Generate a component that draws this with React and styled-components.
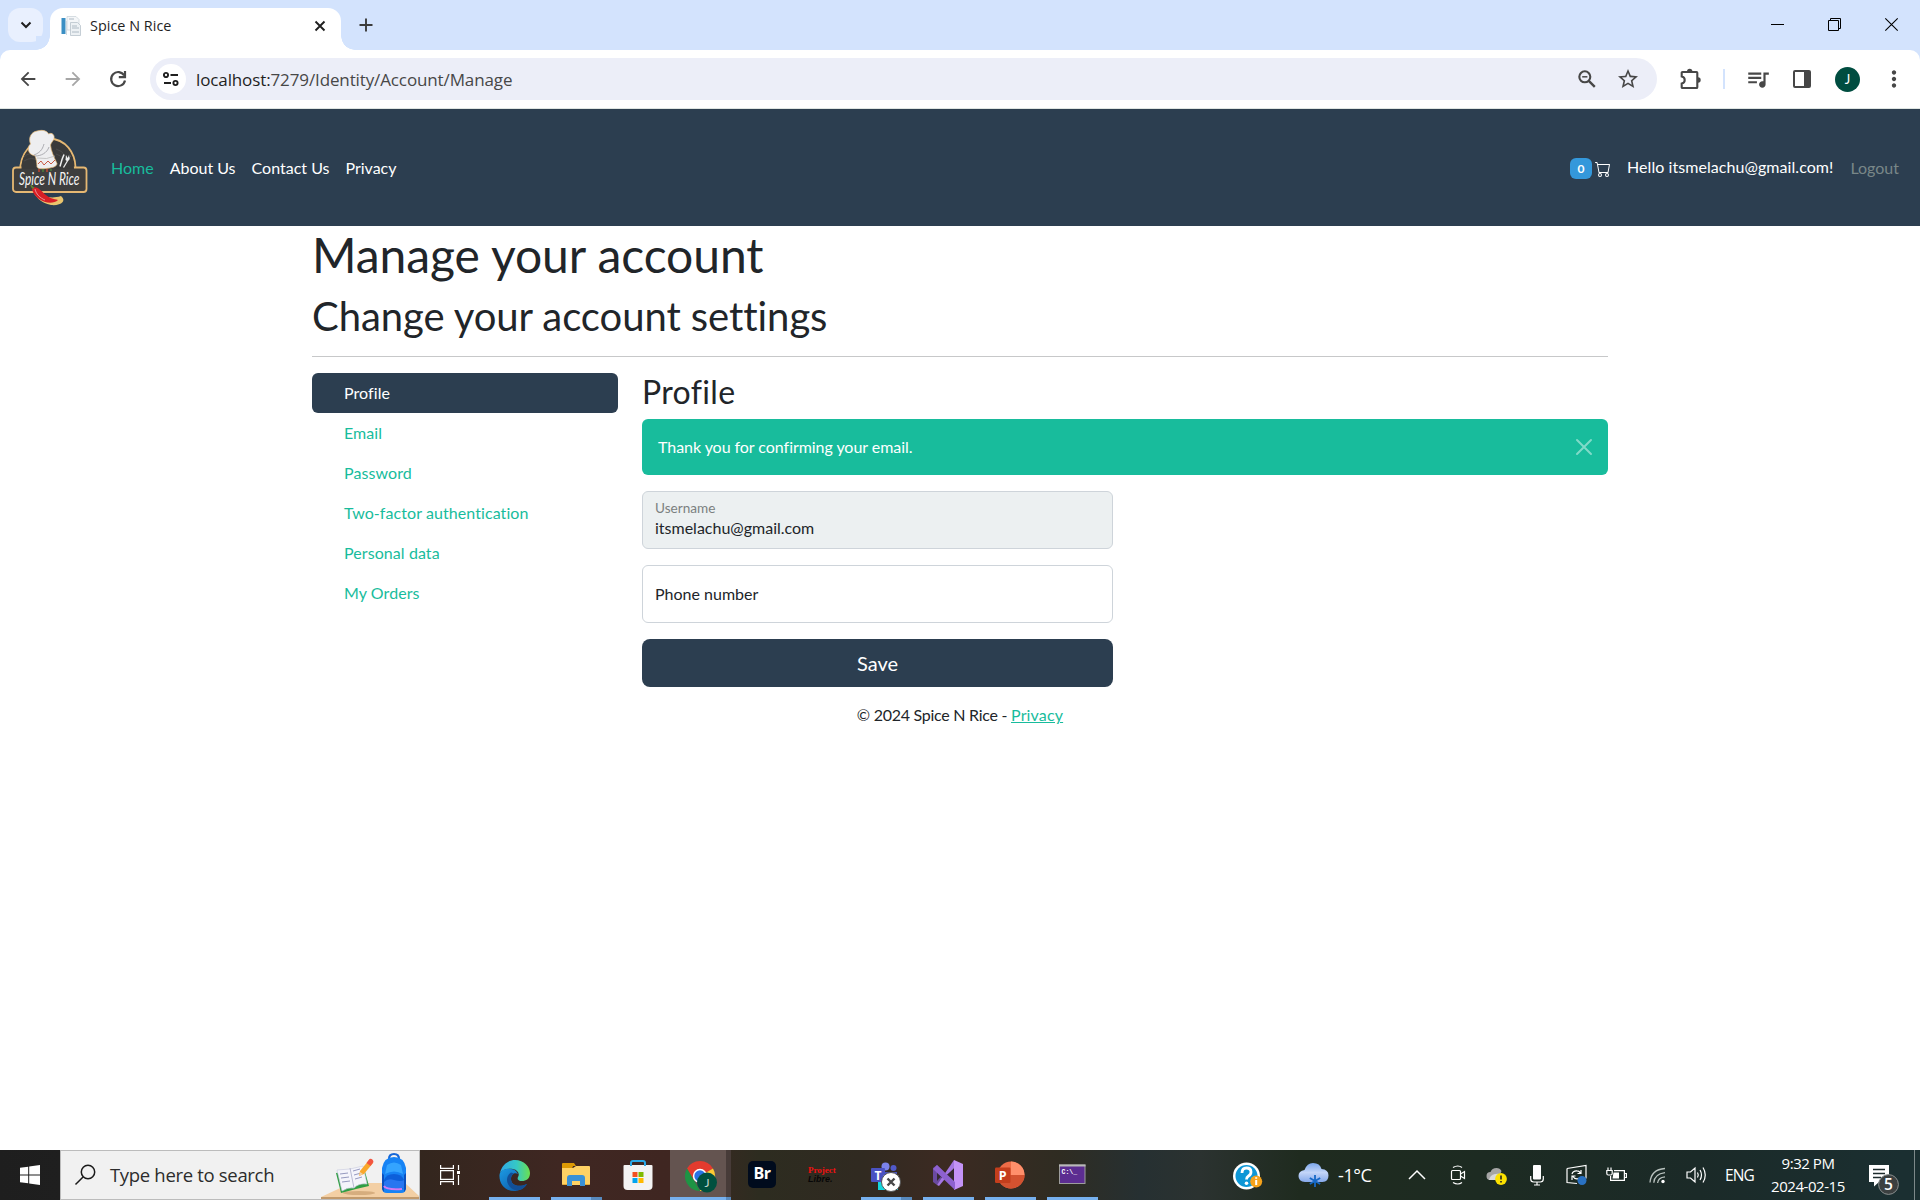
import React from "react";
import styled, { createGlobalStyle, css } from "styled-components";
import {
  MdArrowBack,
  MdArrowForward,
  MdStarOutline,
  MdQueueMusic,
  MdMoreVert,
} from "react-icons/md";
import { BsCart } from "react-icons/bs";

const GlobalStyle = createGlobalStyle`
  *, *::before, *::after { box-sizing: border-box; }
  body {
    margin: 0;
    background: #fff;
    overflow: hidden;
  }
  svg { display: block; flex: none; overflow: visible; }
`;

const uiFont = `"Open Sans", "Noto Sans", sans-serif`;
const pageFont = `Lato, "Liberation Sans", sans-serif`;

const Screen = styled.div`
  display: flex;
  flex-direction: column;
  width: 1920px;
  height: 1200px;
  overflow: hidden;
`;

/* ---------- Browser window ---------- */

const TabStrip = styled.div`
  display: flex;
  align-items: flex-start;
  height: 50px;
  padding: 8px 0 0 8px;
  background: #d3e3fd;
`;

const TabSearch = styled.button`
  display: grid;
  place-items: center;
  width: 35px;
  height: 34px;
  padding: 0;
  border: 0;
  border-radius: 12px;
  background: #e9f0fe;
`;

const TabFoot = styled.span`
  align-self: flex-end;
  width: 14px;
  height: 14px;
  background: radial-gradient(
    circle at ${(p) => (p.$side === "left" ? "0 0" : "100% 0")},
    #d3e3fd 13.5px,
    #fff 14px
  );
  ${(p) =>
    p.$side === "left" &&
    css`
      margin-left: -7px;
    `}
`;

const Tab = styled.div`
  display: flex;
  align-items: center;
  width: 291px;
  height: 42px;
  padding: 0 11px 7px 11px;
  border-radius: 13px 13px 0 0;
  background: #fff;
`;

const TabTitle = styled.span`
  flex: 1;
  margin-left: 9px;
  font: 400 14.4px/20px ${uiFont};
  letter-spacing: 0.03px;
  color: #1f1f1f;
`;

const NewTab = styled.button`
  display: grid;
  place-items: center;
  width: 34px;
  height: 34px;
  margin-left: -6px;
  padding: 0;
  border: 0;
  background: none;
`;

const WindowControls = styled.div`
  display: flex;
  margin: -8px 0 0 auto;
`;

const WindowButton = styled.button`
  display: grid;
  place-items: center;
  width: 57px;
  height: 49px;
  padding: 0;
  border: 0;
  background: none;
`;

const ToolbarBack = styled.div`
  background: #d3e3fd;
`;

const Toolbar = styled.div`
  display: flex;
  align-items: center;
  height: 59px;
  padding-left: 5px;
  border-bottom: 1px solid #dfe5e2;
  border-radius: 10px 10px 0 0;
  background: #fff;
  color: #474747;
`;

const ToolButton = styled.button`
  display: grid;
  place-items: center;
  width: ${(p) => p.$w || 45}px;
  height: 42px;
  padding: 0;
  border: 0;
  background: none;
  color: ${(p) => (p.$muted ? "#a6a6a6" : "#474747")};
`;

const Omnibox = styled.div`
  display: flex;
  align-items: center;
  width: 1507px;
  height: 42px;
  margin-left: 10px;
  padding: 0 9px 0 6px;
  border-radius: 21px;
  background: #eceef8;
`;

const SiteInfo = styled.span`
  display: grid;
  place-items: center;
  width: 30px;
  height: 30px;
  border-radius: 50%;
  background: #fff;
`;

const Url = styled.span`
  flex: 1;
  margin-left: 10px;
  padding-top: 1px;
  font: 400 17px/24px ${uiFont};
  letter-spacing: -0.12px;
  color: #474747;

  b {
    font-weight: 400;
    color: #1f1f1f;
  }
`;

const Divider = styled.span`
  width: 2px;
  height: 20px;
  background: #d3e3fd;
`;

const Avatar = styled.span`
  display: grid;
  place-items: center;
  width: 25px;
  height: 25px;
  border-radius: 50%;
  background: #004d40;
  font: 400 13px/25px ${pageFont};
  color: #fff;
`;

/* ---------- Page ---------- */

const Page = styled.div`
  flex: 1;
  font: 400 16px/24px ${pageFont};
  font-variant-ligatures: none;
  color: #212529;
  background: #fff;
`;

const Navbar = styled.nav`
  display: flex;
  align-items: center;
  height: 117px;
  padding: 0 21px 0 12px;
  background: #2c3e50;
`;

const NavLinks = styled.div`
  display: flex;
  gap: 16px;
  margin-left: 23px;
`;

const NavLink = styled.a`
  color: ${(p) => (p.$active ? "#18bc9c" : "#fff")};
`;

const NavRight = styled.div`
  display: flex;
  align-items: center;
  margin-left: auto;
  color: #fff;
`;

const Badge = styled.span`
  width: 22px;
  height: 21px;
  margin-top: 1px;
  border-radius: 6px;
  background: #3498db;
  font-size: 12px;
  font-weight: 700;
  line-height: 21px;
  text-align: center;
`;

const CartIcon = styled(BsCart)`
  margin: 2px 0 0 3px;
`;

const Greeting = styled.span`
  margin: -1px 0 0 16px;
  letter-spacing: 0.06px;
`;

const Logout = styled.span`
  margin-left: 17px;
  color: #798788;
`;

const Container = styled.main`
  width: 1320px;
  margin: 0 auto;
  padding: 0 12px;
`;

const Heading = styled.h1`
  margin: 0 0 8px;
  font-size: ${(p) => p.$size}px;
  font-weight: 400;
  line-height: 1.2;
  letter-spacing: ${(p) => (p.$size > 32 ? "-0.06px" : "0.35px")};
`;

const Rule = styled.hr`
  height: 1px;
  margin: 16px 0;
  border: 0;
  background: #c7c8c9;
`;

const Columns = styled.div`
  display: grid;
  grid-template-columns: 306px 966px;
  gap: 24px;
`;

const SideNav = styled.ul`
  margin: 0;
  padding: 0;
  list-style: none;
  letter-spacing: 0.08px;
`;

const SideItem = styled.li`
  height: 40px;
  padding: 8px 32px;
  border-radius: 6px;
  color: ${(p) => (p.$active ? "#fff" : "#18bc9c")};
  background: ${(p) => (p.$active ? "#2c3e50" : "transparent")};
`;

const Alert = styled.div`
  display: flex;
  align-items: center;
  justify-content: space-between;
  height: 56px;
  margin-bottom: 16px;
  padding: 0 16px;
  border-radius: 6px;
  background: #18bc9c;
  color: #fff;
  letter-spacing: -0.05px;
`;

const Form = styled.form`
  display: flex;
  flex-direction: column;
  gap: 16px;
  width: 471px;
`;

const Field = styled.label`
  display: flex;
  flex-direction: column;
  justify-content: center;
  height: 58px;
  padding: ${(p) => (p.$disabled ? "0 12px 3px" : "0 12px")};
  border: 1px solid #ced4da;
  border-radius: 6px;
  background: ${(p) => (p.$disabled ? "#ecf0f1" : "#fff")};
`;

const FieldLabel = styled.span`
  padding-top: 1px;
  font-size: 13.6px;
  line-height: 19px;
  color: #7b8080;
`;

const FieldValue = styled.span`
  line-height: 20px;
`;

const SaveButton = styled.button`
  height: 48px;
  border: 0;
  border-radius: 8px;
  background: #2c3e50;
  color: #fff;
  font: 400 20px/30px ${pageFont};
`;

const Footer = styled.footer`
  padding-top: 16px;
  text-align: center;
  letter-spacing: -0.27px;

  a {
    color: #18bc9c;
    letter-spacing: 0.15px;
    text-decoration: underline;
  }
`;

/* ---------- Taskbar ---------- */

const Taskbar = styled.div`
  display: flex;
  height: 50px;
  background: linear-gradient(
    90deg,
    #1e1e1e 0,
    #1f1f1f 60px,
    #33261e 420px,
    #3f2722 560px,
    #3f2621 670px,
    #2d2c20 760px,
    #302a21 860px,
    #3c2a22 945px,
    #2f2c22 1060px,
    #263032 1140px,
    #2b3230 1200px,
    #1f2b1f 1300px,
    #1d2b22 1480px,
    #1b2a28 1700px,
    #1b2f31 1900px,
    #1b2f31 1920px
  );
  color: #fff;
  font-family: ${uiFont};
`;

const Slot = styled.div`
  display: grid;
  place-items: center;
  width: ${(p) => p.$w}px;
  height: 50px;
`;

const SearchBox = styled.div`
  display: flex;
  align-items: center;
  width: 360px;
  height: 50px;
  padding-left: 13px;
  border: 1px solid #bcbcbc;
  background: #f1f1f1;
`;

const SearchText = styled.span`
  flex: 1;
  margin-left: 14px;
  font-size: 18.5px;
  line-height: 26px;
  letter-spacing: -0.32px;
  white-space: nowrap;
  color: #2c2c2c;
`;

const Apps = styled.div`
  display: flex;
  padding-left: 3px;
`;

const AppSlot = styled.div`
  display: flex;
  flex-direction: column;
  align-items: center;
  justify-content: space-between;
  width: 62px;
  height: 50px;
  padding-top: 10px;
  background: ${(p) =>
    p.$current
      ? "linear-gradient(90deg, transparent 1px, #645450 1px 57px, #473b38 57px)"
      : "none"};
`;

const OpenMark = styled.span`
  width: ${(p) => (p.$wide ? 61 : 51)}px;
  height: 3px;
  background: ${(p) =>
    p.$stacked
      ? "linear-gradient(90deg, #76b0ee 0 calc(100% - 11px), #5789bd calc(100% - 11px))"
      : p.$wide
      ? "linear-gradient(90deg, #76b0ee 0 56px, #5789bd 56px)"
      : p.$open
      ? "#76b0ee"
      : "transparent"};
`;

const BridgeTile = styled.span`
  width: 28px;
  height: 27px;
  margin-top: 1px;
  border-radius: 5px;
  background: #000b1d;
  font: 700 16px/25px ${uiFont};
  letter-spacing: -0.5px;
  text-align: center;
`;

const ProjectLogo = styled.span`
  display: flex;
  flex-direction: column;
  width: 32px;
  margin-top: 6px;
  font: 700 9px/9px "Liberation Serif", serif;
  color: #f01010;

  i {
    font-family: "Liberation Sans", sans-serif;
    color: #070707;
  }
`;

const Tray = styled.div`
  display: flex;
  margin-left: auto;
`;

const Temp = styled.div`
  display: flex;
  align-items: center;
  width: 127px;
  padding-left: 28px;
  gap: 9px;
  font-size: 18px;
  letter-spacing: -0.4px;
`;

const Lang = styled.span`
  font-size: 15.5px;
  line-height: 20px;
  letter-spacing: -0.8px;
`;

const Clock = styled.div`
  display: flex;
  flex-direction: column;
  align-items: center;
  width: 90px;
  padding-top: 2px;
  font-size: 15px;
  line-height: 23px;
  letter-spacing: -0.45px;
  white-space: nowrap;
`;

const ShowDesktop = styled.div`
  width: 6px;
  border-left: 1px solid #7d8889;
`;

/* ---------- Drawings ---------- */

const Favicon = () => (
  <svg width="20" height="20" viewBox="0 0 20 20">
    <path d="M6 .5h9l3 3V14H6z" fill="#f4f6f8" stroke="#cdd5dc" strokeWidth=".8" />
    <rect x=".5" y="2" width="4" height="16" fill="#3b8fc4" />
    <path d="M5.500 5v14" stroke="#d2dae0" />
    <path d="M9.500 6.500h7l3 3v10h-10z" fill="#edf1f4" stroke="#b9c3cc" strokeWidth=".8" />
    <path d="M11 10h5M11 12h7M11 16h7M8 3h5" stroke="#aebac4" />
  </svg>
);

const ReloadIcon = () => (
  <svg width="18" height="18" viewBox="0 0 18 18" fill="none" stroke="#474747" strokeWidth="2.200">
    <path d="M15.200 5.500A7 7 0 1 0 16 10.500" />
    <path d="M16 1v6.200H9.800" />
  </svg>
);

const ZoomOutIcon = () => (
  <svg width="18" height="18" viewBox="0 0 18 18" fill="none" stroke="#474747" strokeWidth="2.100">
    <circle cx="6.800" cy="6.800" r="5.500" />
    <path d="M10.800 10.800l6 6" strokeWidth="2.400" />
    <path d="M4.200 6.800h5.200" strokeWidth="1.500" />
  </svg>
);

const ExtensionIcon = () => (
  <svg width="22" height="22" viewBox="0 0 22 22">
    <path
      d="M3.500 4h14q.8 0 .8.800v14.400q0 .8-.8.800h-14q-.8 0-.8-.800v-3.700c2-.4 3-1.600 3-3.500s-1-3.100-3-3.500V4.800q0-.8.8-.800z"
      fill="none"
      stroke="#474747"
      strokeWidth="2.100"
    />
    <path d="M8 3.500a2.700 2.700 0 0 1 5.400 0zM19 9.300a2.700 2.700 0 0 1 0 5.400z" fill="#474747" />
  </svg>
);

const SpiceLogo = () => (
  <svg width="76" height="78" viewBox="0 0 76 78">
    <path
      d="M8 43C8 24 20 10 37 9.500C54 10 63 24 63.500 38"
      fill="#3a3a3a"
      stroke="#e6b873"
      strokeWidth="1.800"
    />
    <rect x="1" y="38.500" width="73.500" height="24.500" rx="3" fill="#3e3e3e" stroke="#e6b873" strokeWidth="1.800" />
    <path d="M9.500 40C9 25 20 12 37 11C53 12 62 25 62 40z" fill="#3a3a3a" />
    <path d="M12 32q8-5 14 0M12 28q6-6 12-1M44 20q6 1 10 8M44 25q5 1 8 6" stroke="#4b4b4b" fill="none" />
    <path
      d="M25 38C25 34 24 28 22.500 26.500C16 26 14.500 18 18.500 15C16 9 19 3 25 2C32 0 36 3 36.500 5C40 3 43 6 42 10C41 12 39 14 38.500 16C39 22 42 28 45 34.500C45 38 39 39 34 39.500C30 40 26 40 25 38z"
      fill="#eeeef0"
      stroke="#e6b873"
      strokeWidth=".7"
    />
    <path d="M22 26c8-3 9-8 10-11M23 27c6 0 12-3 14-9" stroke="#9b9ba1" strokeWidth=".8" fill="none" />
    <path d="M25 29q10 2 18-2" stroke="#bbb" strokeWidth=".8" fill="none" />
    <path d="M26 35l3-3 3 4 4-4 3 3 4-4" stroke="#c85a44" strokeWidth="1" fill="none" />
    <path d="M27 40v3M35 40v3" stroke="#d5452f" strokeWidth="1.300" />
    <path d="M31 40v3M39 40v2" stroke="#4d8b3a" strokeWidth="1.300" />
    <path d="M52 25.500l-2 5-2 7" stroke="#efefef" strokeWidth="1.500" fill="none" />
    <path d="M56 31l-4.500 7.500" stroke="#efefef" strokeWidth="1.300" fill="none" />
    <path d="M54 26l-.5 5q2 2 4-.5l1-4.500-1.500 3.500.2-4-1.500 3.500z" fill="#efefef" />
    <text
      transform="translate(7 56) scale(.66 1)"
      fontFamily="Lato, sans-serif"
      fontStyle="italic"
      fontSize="18"
      fill="#f4f4f4"
    >
      Spice N Rice
    </text>
    <path d="M49 67C55 72 49 77 39 76C29 74 22 67 20.500 60C27 66 37 71 49 67z" fill="#e9c46d" />
    <path d="M20.500 58.500C25 57 29 61 32.500 65C37 69 42 70 46 71C42 75 33 74.500 27 70C22 66 19.500 62 20.500 58.500z" fill="#d81f26" />
    <path d="M23 60c1 5 5 9 10 11" stroke="#fff" strokeOpacity=".55" strokeWidth=".9" fill="none" />
    <path d="M19 56q1 3 3 3" stroke="#5c8a33" strokeWidth="1.500" fill="none" />
  </svg>
);

const WindowsLogo = () => (
  <svg width="20" height="20" viewBox="0 0 20 20" fill="#fff">
    <path d="M0 2.800L8.200 1.700V9.500H0zM9.200 1.500L20 0V9.500H9.200zM0 10.500H8.200V18.300L0 17.200zM9.200 10.500H20V20L9.200 18.500z" />
  </svg>
);

const SearchArt = () => (
  <svg width="98" height="48" viewBox="0 0 98 48">
    <path d="M0 46L30 32H84L98 45V46z" fill="#f3cfa4" />
    <path d="M0 46H98V48H0z" fill="#c29a6c" />
    <ellipse cx="38" cy="42" rx="16" ry="2" fill="#d6ad7e" />
    <path d="M15 22l5 20q14-4 28-7l-5-18z" fill="#2f9e44" />
    <path d="M16 19l13-1 13-3 4 18q-8-1-13 4-6-1-12 3z" fill="#f4f4fb" stroke="#c7c9dd" strokeWidth=".6" />
    <path d="M29 17l4 20" stroke="#b8bad2" />
    <path d="M19 23l8-1M20 27l8-1M21 31l8-1M32 20l7-2M33 24l7-2M34 28l7-2" stroke="#8a8fb8" strokeWidth=".9" />
    <path d="M38 25l1-5 9-11 4 3-9 11z" fill="#f9a72b" />
    <path d="M45.500 12l3-4q3-1 4 3l-3 4z" fill="#f25540" />
    <path d="M38 25l1-4 3 2z" fill="#efd0a6" />
    <path d="M68 8q0-5 5-5t5 5" stroke="#1768d8" strokeWidth="2.200" fill="none" />
    <path d="M61 17q2-11 12-11t12 11v20q0 5-5 5H66q-5 0-5-5z" fill="#1683f5" />
    <path d="M61 22l2 2v17l-2-3zM85 22l-2 2v17l2-3z" fill="#0b4fbd" />
    <path d="M66 14q7-5 14 0l2 9q-9-5-18 0z" fill="#34a4ff" />
    <path d="M63 29q2-6 10-6t10 6v8q-10 4-20 0z" fill="#0c5fda" />
    <path d="M63 31q4-4 10-2 7 2 10 0v8H63z" fill="#2876f0" />
    <path d="M63 35q2 4 18 3" stroke="#cf7bf2" strokeWidth="2" fill="none" />
  </svg>
);

const EdgeIcon = () => (
  <svg width="31" height="31" viewBox="0 0 31 31">
    <defs>
      <linearGradient id="edgeTop" x1="0" x2="1">
        <stop offset="0" stopColor="#2fa8e8" />
        <stop offset=".55" stopColor="#35c8c5" />
        <stop offset="1" stopColor="#6be04f" />
      </linearGradient>
      <linearGradient id="edgeBase" x1="0" y1="0" x2="1" y2="1">
        <stop offset="0" stopColor="#1b9be4" />
        <stop offset="1" stopColor="#0c4f9e" />
      </linearGradient>
    </defs>
    <path d="M1 13C3 4 10 0 16 0c9 0 15 7 15 13 0 6-4 8-8 8-4 0-5-2-4-4 2-3 0-7-5-8C8 8 3 10 1 13z" fill="url(#edgeTop)" />
    <path d="M.5 15C1 10 7 8 12 9c4 0 6 3 7 5-4-2-7 1-7 5 0 6 7 9 16 5-3 5-8 7-13 7C6 31 0 24 .5 15z" fill="url(#edgeBase)" />
    <path d="M12 12.500C8 15 7 20 9 24c2 4 5 6 9 6.500 4-.5 8-3 10-6.500-9 4-16 1-16-5 0-3 1-4 3-5.500z" fill="#124f97" />
  </svg>
);

const FolderIcon = () => (
  <svg width="28" height="31" viewBox="0 0 28 31">
    <path d="M0 4q0-1 1-1h11l2 3h-3l-1 3H0z" fill="#dd9a05" />
    <path d="M0 8h11l3-2h13q1 0 1 1v17q0 1-1 1H1q-1 0-1-1z" fill="#ffd264" />
    <path d="M5 26V18q0-3 3-3h12q3 0 3 3v8h-5v-5h-8v5z" fill="#3a91d6" />
    <path d="M1 24.500h4M23 24.500h4" stroke="#e8ad36" />
  </svg>
);

const StoreIcon = () => (
  <svg width="30" height="31" viewBox="0 0 30 31">
    <path d="M8 7V3q0-2 2-2h10q2 0 2 2v4" fill="none" stroke="#29a9e8" strokeWidth="2" />
    <path d="M.5 6q0-1 1-1H28.500q1 0 1 1V26q0 4-4 4H4.500q-4 0-4-4z" fill="#f3f3f3" />
    <path d="M8 6V3M22 6V3" stroke="#29a9e8" strokeWidth="2" />
    <path d="M9.500 12h5v5h-5z" fill="#f25022" />
    <path d="M15.500 12h5v5h-5z" fill="#7fba00" />
    <path d="M9.500 18h5v5h-5z" fill="#00a4ef" />
    <path d="M15.500 18h5v5h-5z" fill="#ffb900" />
  </svg>
);

const ChromeIcon = () => (
  <svg width="32" height="33" viewBox="0 0 32 33">
    <path d="M16 16L3 8.500A15 15 0 0 1 29 8.500z" fill="#e33b2e" />
    <path d="M16 16L29 8.500A15 15 0 0 1 16 31z" fill="#fcc934" />
    <path d="M3 8.500L9.500 20l6.500-4V9H29z" fill="#e33b2e" />
    <path d="M3 8.500l6.500 11L16 31A15 15 0 0 1 3 8.500z" fill="#1e9444" />
    <circle cx="16" cy="16" r="7.200" fill="#fff" />
    <circle cx="16" cy="16" r="5.700" fill="#2a72e5" />
    <circle cx="23" cy="22.500" r="10" fill="#00503f" />
    <text x="23" y="27" textAnchor="middle" fontFamily="Lato, sans-serif" fontSize="12" fill="#c4d5d0">
      J
    </text>
  </svg>
);

const TeamsIcon = () => (
  <svg width="30" height="32" viewBox="0 0 30 32">
    <circle cx="14.500" cy="6.500" r="4" fill="#7b83eb" />
    <circle cx="22.500" cy="8" r="3" fill="#5059c9" />
    <path d="M9 12h17v8H9z" fill="#4b53bc" />
    <path d="M7 21h20v9H7z" fill="#16d6dc" />
    <rect x="0" y="8" width="14" height="14" rx="1" fill="#4a52c2" />
    <text x="7" y="19.500" textAnchor="middle" fontFamily="Open Sans, sans-serif" fontWeight="700" fontSize="12" fill="#fff">
      T
    </text>
    <circle cx="20" cy="22" r="9.500" fill="#fff" stroke="#555" />
    <path d="M16.500 18.500l7 7M23.500 18.500l-7 7" stroke="#484848" strokeWidth="2.400" />
  </svg>
);

const VisualStudioIcon = () => (
  <svg width="30" height="31" viewBox="0 0 30 31">
    <path d="M0 8l4-3 6 6-4 4 4 4-6 6-4-3z" fill="#6a4aa0" />
    <path d="M4 10l0 11 5-5.500z" fill="#352a30" />
    <path d="M4 25L21 0l1 7L6 26z" fill="#a576e2" />
    <path d="M21 0l9 4v22l-9 4z" fill="#c493f7" />
    <path d="M13 15.500l8-7v14z" fill="#352a30" />
    <path d="M4 5l18 17v8L0 9z" fill="#8d61cf" />
  </svg>
);

const PowerPointIcon = () => (
  <svg width="30" height="31" viewBox="0 0 30 31">
    <circle cx="16" cy="15" r="13.500" fill="#ed6c47" />
    <path d="M16 15V1.500A13.500 13.500 0 0 1 29.500 15z" fill="#ff8f6b" />
    <path d="M2.500 15h27A13.500 13.500 0 0 1 2.500 15z" fill="#d35230" />
    <rect x="0" y="7.500" width="15.500" height="15.500" rx="1.200" fill="#c43e1c" />
    <text x="7.800" y="20" textAnchor="middle" fontFamily="Open Sans, sans-serif" fontWeight="700" fontSize="12.500" fill="#fff">
      P
    </text>
  </svg>
);

const ConsoleIcon = () => (
  <svg width="27" height="31" viewBox="0 0 27 31">
    <rect x=".5" y="5" width="25.500" height="18.500" fill="#5c2d91" stroke="#9d9d9d" />
    <path d="M0 5.500h26.500" stroke="#b9b9b9" strokeWidth="2" />
    <text x="2.500" y="14" fontFamily="Liberation Mono, monospace" fontWeight="700" fontSize="6.500" fill="#fff">
      C:\_
    </text>
  </svg>
);

const HelpIcon = () => (
  <svg width="30" height="26" viewBox="0 0 30 26">
    <circle cx="13.500" cy="14" r="13.500" fill="#fff" />
    <circle cx="13.500" cy="14" r="11" fill="#0d96d6" />
    <path d="M9 11q0-5 4.500-5 4.500 0 4.500 4 0 2.500-2.500 4-2 1.200-2 3.500" fill="none" stroke="#fff" strokeWidth="2.800" />
    <circle cx="13.500" cy="21.200" r="1.800" fill="#fff" />
    <circle cx="23.200" cy="19.500" r="6" fill="#f5a21b" />
    <path d="M23.200 18v5M23.200 15.200v1.600" stroke="#fff" strokeWidth="2" />
  </svg>
);

const SnowCloud = () => (
  <svg width="31" height="28" viewBox="0 0 31 28">
    <defs>
      <linearGradient id="cloudFill" x1="0" y1="0" x2="0" y2="1">
        <stop offset="0" stopColor="#7ba6ec" />
        <stop offset=".5" stopColor="#c3d5f8" />
        <stop offset="1" stopColor="#86a9ea" />
      </linearGradient>
    </defs>
    <path d="M7 21q-6.500-.5-6.500-6 0-5 6-6Q9 2 15 2q7 0 8.500 6 7 .5 7 6.500t-6 6.500z" fill="url(#cloudFill)" />
    <path d="M17 14v12M11.800 17l10.400 6M22.200 17l-10.400 6" stroke="#1668c6" strokeWidth="1.800" />
  </svg>
);

const ChevronUp = () => (
  <svg width="18" height="10" viewBox="0 0 18 10">
    <path d="M1 9l8-8 8 8" fill="none" stroke="#fff" strokeWidth="1.500" />
  </svg>
);

const MeetNow = () => (
  <svg width="16" height="20" viewBox="0 0 16 20" fill="none" stroke="#fff" strokeWidth="1.200">
    <rect x="1.500" y="5.500" width="9" height="9" rx="1" />
    <path d="M10.500 9l4-2.500v7l-4-2.500M3 2.500q5-3 9 0M3 17.500q5 3 9 0" />
  </svg>
);

const OneDrive = () => (
  <svg width="22" height="18" viewBox="0 0 22 18">
    <path d="M4 14q-3.500 0-3.500-4t4-4q1.500-4 6-4 3.500 0 5 3L12 14z" fill="#a5a5a5" />
    <path d="M3 14q1-5 6-6 6-1 8 2l-3 4z" fill="#d9d9d9" />
    <circle cx="15" cy="13" r="5.900" fill="#fce100" />
    <path d="M15 9.500v4M15 15v1.600" stroke="#222" strokeWidth="1.600" />
  </svg>
);

const Microphone = () => (
  <svg width="14" height="22" viewBox="0 0 14 22">
    <rect x="3" y="1" width="8" height="14.500" fill="#fff" rx="1" />
    <path d="M.7 12v3q0 3 3 3h6.600q3 0 3-3v-3M7 18v3M4 21h6" fill="none" stroke="#fff" strokeWidth="1.200" />
  </svg>
);

const SyncWindow = () => (
  <svg width="22" height="20" viewBox="0 0 22 20" fill="none" stroke="#fff" strokeWidth="1.200">
    <path d="M1 3.500L20 .5v13M1 3.500v14l10 1" />
    <path d="M6 9q1-3.500 5-3.200 2.500 0 3.500 2.700M15 5v3.500h-3.500M13 13.500q-4 1.500-6-2M6 15v-4h3.500" />
    <circle cx="16" cy="15.500" r="4.500" fill="#2a72c3" stroke="none" />
  </svg>
);

const BatteryIcon = () => (
  <svg width="22" height="16" viewBox="0 0 22 16" fill="none" stroke="#fff" strokeWidth="1.200">
    <path d="M8 3.600h10.400v9.800H4.600V9" />
    <path d="M18.500 6.500h1.900v4h-1.900M2 .5v3M5 .5v3M.8 3.500h5.400v3q0 1.500-1.400 1.500H2.200Q.8 8 .8 6.500z" />
    <path d="M7.500 5.500h5.500v6H6.500z" fill="#fff" stroke="none" />
  </svg>
);

const WifiIcon = () => (
  <svg width="17" height="17" viewBox="0 0 17 17" fill="none" stroke="#b9c2bf" strokeWidth="1.300">
    <path d="M1 15.500Q2 2.500 16 1.500M4.800 15.800Q5.500 7 16 5.700M8.600 16Q9 10.500 16 9.800" />
    <circle cx="14" cy="14.500" r="1.700" fill="#fff" stroke="none" />
  </svg>
);

const VolumeIcon = () => (
  <svg width="22" height="18" viewBox="0 0 22 18" fill="none" stroke="#fff" strokeWidth="1.200">
    <path d="M1 6h3.500L9 2v14L4.500 12H1zM11.500 6.500q1.500 2.500 0 5M14 4q3 5 0 10M17 1.500q4.500 7.500 0 15" />
  </svg>
);

const Notifications = () => (
  <svg width="32" height="22" viewBox="0 0 32 22">
    <path d="M1 1h20v17H11l-5 4.500V18H1z" fill="#fff" />
    <path d="M5 5.500h12M5 9.500h12M5 13.500h8" stroke="#1d2b2c" strokeWidth="1.300" />
    <circle cx="20.500" cy="20.500" r="9.900" fill="#3c4040" stroke="#8a8f8f" />
    <text x="20.500" y="26" textAnchor="middle" fontFamily="Open Sans, sans-serif" fontWeight="600" fontSize="15.500" fill="#fff">
      5
    </text>
  </svg>
);

/* ---------- Data ---------- */

const sideItems = [
  "Profile",
  "Email",
  "Password",
  "Two-factor authentication",
  "Personal data",
  "My Orders",
];

const apps = [
  { icon: <EdgeIcon />, open: true },
  { icon: <FolderIcon />, open: true, stacked: true },
  { icon: <StoreIcon /> },
  { icon: <ChromeIcon />, current: true },
  { icon: <BridgeTile>Br</BridgeTile> },
  {
    icon: (
      <ProjectLogo>
        Project<i>Libre.</i>
      </ProjectLogo>
    ),
  },
  { icon: <TeamsIcon />, open: true, stacked: true },
  { icon: <VisualStudioIcon />, open: true },
  { icon: <PowerPointIcon />, open: true },
  { icon: <ConsoleIcon />, open: true },
];

const trayItems = [
  { w: 40, icon: <ChevronUp /> },
  { w: 42, icon: <MeetNow /> },
  { w: 36, icon: <OneDrive /> },
  { w: 43, icon: <Microphone /> },
  { w: 38, icon: <SyncWindow /> },
  { w: 41, icon: <BatteryIcon /> },
  { w: 41, icon: <WifiIcon /> },
  { w: 38, icon: <VolumeIcon /> },
];

function BrowserChrome() {
  return (
    <header>
      <TabStrip>
        <TabSearch>
          <svg width="12" height="8" viewBox="0 0 12 8">
            <path d="M1.500 1.500L6 6l4.500-4.500" fill="none" stroke="#1f1f1f" strokeWidth="2" />
          </svg>
        </TabSearch>
        <TabFoot $side="left" />
        <Tab>
          <Favicon />
          <TabTitle>Spice N Rice</TabTitle>
          <svg width="20" height="20" viewBox="0 0 20 20">
            <path d="M5.500 5.500l9 9M14.500 5.500l-9 9" stroke="#1f1f1f" strokeWidth="1.900" />
          </svg>
        </Tab>
        <TabFoot $side="right" />
        <NewTab>
          <svg width="14" height="14" viewBox="0 0 14 14">
            <path d="M7 .5v13M.5 7h13" stroke="#3c3c3c" strokeWidth="1.900" />
          </svg>
        </NewTab>
        <WindowControls>
          <WindowButton>
            <svg width="13" height="13" viewBox="0 0 13 13">
              <path d="M0 6.500h13" stroke="#000" />
            </svg>
          </WindowButton>
          <WindowButton>
            <svg width="13" height="13" viewBox="0 0 13 13" fill="none" stroke="#000">
              <path d="M.5 2.500h10v10H.5zM2.500 2.500v-2h10v10h-2" />
            </svg>
          </WindowButton>
          <WindowButton>
            <svg width="13" height="13" viewBox="0 0 13 13">
              <path d="M.3 .3l12.400 12.400M12.700 .3L.3 12.700" stroke="#000" strokeWidth="1.100" />
            </svg>
          </WindowButton>
        </WindowControls>
      </TabStrip>
      <ToolbarBack>
        <Toolbar>
          <ToolButton>
            <MdArrowBack size={22} />
          </ToolButton>
          <ToolButton $muted>
            <MdArrowForward size={22} />
          </ToolButton>
          <ToolButton>
            <ReloadIcon />
          </ToolButton>
          <Omnibox>
            <SiteInfo>
              <svg width="16" height="14" viewBox="0 0 16 14" fill="none" stroke="#1f1f1f" strokeWidth="1.900">
                <circle cx="3" cy="3" r="2.100" />
                <path d="M7.500 3H15M1 11h7" />
                <circle cx="12.500" cy="11" r="2.100" />
              </svg>
            </SiteInfo>
            <Url>
              <b>localhost:</b>7279/Identity/Account/Manage
            </Url>
            <ToolButton $w={40}>
              <ZoomOutIcon />
            </ToolButton>
            <ToolButton $w={41}>
              <MdStarOutline size={24} />
            </ToolButton>
          </Omnibox>
          <ToolButton $w={66}>
            <ExtensionIcon />
          </ToolButton>
          <Divider />
          <ToolButton $w={65}>
            <MdQueueMusic size={26} />
          </ToolButton>
          <ToolButton $w={24}>
            <svg width="18" height="18" viewBox="0 0 18 18">
              <rect x="1" y="1" width="16" height="16" rx="1" fill="none" stroke="#474747" strokeWidth="2" />
              <path d="M11 1h6v16h-6z" fill="#474747" />
            </svg>
          </ToolButton>
          <ToolButton $w={67}>
            <Avatar>J</Avatar>
          </ToolButton>
          <ToolButton $w={22}>
            <MdMoreVert size={26} />
          </ToolButton>
        </Toolbar>
      </ToolbarBack>
    </header>
  );
}

function AccountPage() {
  return (
    <Page>
      <Navbar>
        <SpiceLogo />
        <NavLinks>
          <NavLink $active>Home</NavLink>
          <NavLink>About Us</NavLink>
          <NavLink>Contact Us</NavLink>
          <NavLink>Privacy</NavLink>
        </NavLinks>
        <NavRight>
          <Badge>0</Badge>
          <CartIcon size={16} />
          <Greeting>Hello itsmelachu@gmail.com!</Greeting>
          <Logout>Logout</Logout>
        </NavRight>
      </Navbar>
      <Container>
        <Heading $size={48}>Manage your account</Heading>
        <Heading as="h2" $size={40}>
          Change your account settings
        </Heading>
        <Rule />
        <Columns>
          <SideNav>
            {sideItems.map((item, i) => (
              <SideItem key={item} $active={i === 0}>
                {item}
              </SideItem>
            ))}
          </SideNav>
          <section>
            <Heading as="h3" $size={32}>
              Profile
            </Heading>
            <Alert>
              Thank you for confirming your email.
              <svg width="16" height="16" viewBox="0 0 16 16">
                <path
                  d="M1 1l14 14M15 1L1 15"
                  stroke="#fff"
                  strokeOpacity=".45"
                  strokeWidth="2"
                  strokeLinecap="round"
                />
              </svg>
            </Alert>
            <Form>
              <Field $disabled>
                <FieldLabel>Username</FieldLabel>
                <FieldValue>itsmelachu@gmail.com</FieldValue>
              </Field>
              <Field>
                <FieldValue>Phone number</FieldValue>
              </Field>
              <SaveButton type="button">Save</SaveButton>
            </Form>
          </section>
        </Columns>
        <Footer>
          © 2024 Spice N Rice - <a>Privacy</a>
        </Footer>
      </Container>
    </Page>
  );
}

function WindowsTaskbar() {
  return (
    <Taskbar>
      <Slot $w={60}>
        <WindowsLogo />
      </Slot>
      <SearchBox>
        <svg width="22" height="22" viewBox="0 0 22 22" fill="none" stroke="#1a1a1a" strokeWidth="1.500">
          <circle cx="14" cy="8" r="6.700" />
          <path d="M9.300 12.700L1.500 20.500" />
        </svg>
        <SearchText>Type here to search</SearchText>
        <SearchArt />
      </SearchBox>
      <Slot $w={60}>
        <svg width="20" height="20" viewBox="0 0 20 20" fill="none" stroke="#fff" strokeWidth="1.200">
          <path d="M.6 0v3.400h12.800V0M.6 20v-3.400h12.800V20M.6 5.600h12.800v8.800H.600zM18.500 0v5M18.500 10v10" />
          <path d="M17 6h3v3h-3z" fill="#fff" stroke="none" />
        </svg>
      </Slot>
      <Apps>
        {apps.map((app, i) => (
          <AppSlot key={i} $current={app.current}>
            {app.icon}
            {(app.open || app.current) && (
              <OpenMark $open={app.open} $stacked={app.stacked} $wide={app.current} />
            )}
          </AppSlot>
        ))}
      </Apps>
      <Tray>
        <Slot $w={44}>
          <HelpIcon />
        </Slot>
        <Temp>
          <SnowCloud />
          -1°C
        </Temp>
        {trayItems.map((item, i) => (
          <Slot key={i} $w={item.w}>
            {item.icon}
          </Slot>
        ))}
        <Slot $w={47}>
          <Lang>ENG</Lang>
        </Slot>
        <Clock>
          <span>9:32 PM</span>
          <span>2024-02-15</span>
        </Clock>
        <Slot $w={61}>
          <Notifications />
        </Slot>
        <ShowDesktop />
      </Tray>
    </Taskbar>
  );
}

export default function App() {
  return (
    <Screen>
      <GlobalStyle />
      <BrowserChrome />
      <AccountPage />
      <WindowsTaskbar />
    </Screen>
  );
}
